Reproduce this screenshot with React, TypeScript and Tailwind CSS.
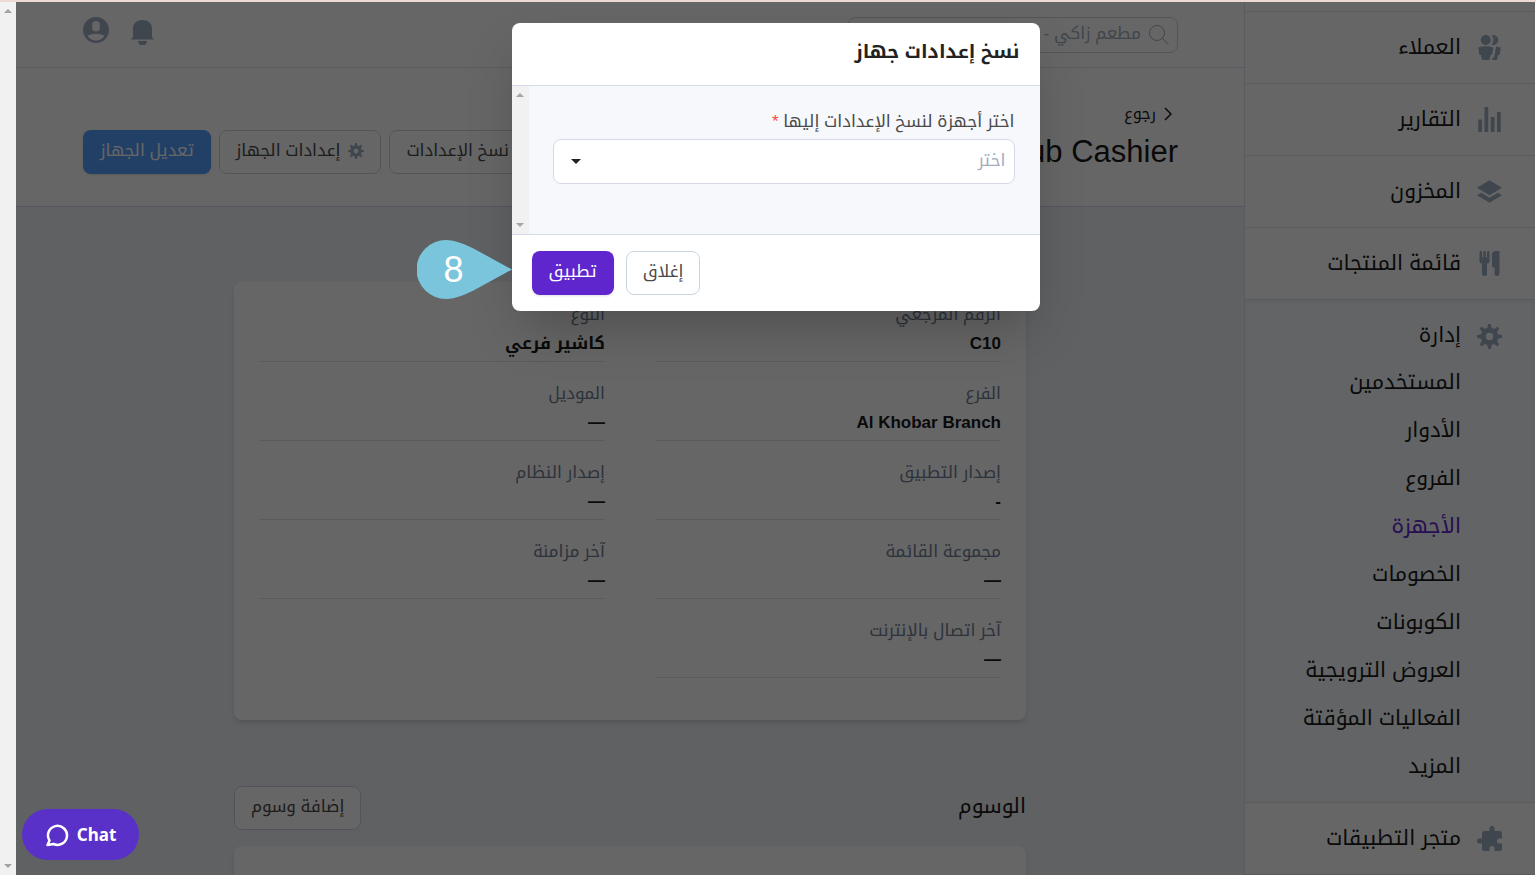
import { ReactNode, useState } from "react";

const icons = {
  customers:
    "M7 8a4 4 0 1 1 0-8 4 4 0 0 1 0 8zm0 1c2.15 0 4.2.4 6.1 1.09L12 16h-1.25L10 20H4l-.75-4H2L.9 10.09A17.93 17.93 0 0 1 7 9zm8.31.17c1.32.18 2.59.48 3.8.92L18 16h-1.25L16 20h-3.96l.37-2h1.25l1.65-8.83zM13 0a4 4 0 1 1-1.33 7.76 5.96 5.96 0 0 0 0-7.52C12.1.1 12.53 0 13 0z",
  reports: "M1 10h3v10H1V10zM6 0h3v20H6V0zm5 8h3v12h-3V8zm5-4h3v16h-3V4z",
  inventory:
    "M10 1l10 6-10 6L0 7l10-6zm6.67 10L20 13l-10 6-10-6 3.33-2L10 15l6.67-4z",
  menu: "M18 11v7a2 2 0 0 1-4 0v-5h-2V3a3 3 0 0 1 3-3h3v11zM4 10a2 2 0 0 1-2-2V1a1 1 0 0 1 2 0v4h1V1a1 1 0 0 1 2 0v4h1V1a1 1 0 0 1 2 0v7a2 2 0 0 1-2 2v8a2 2 0 0 1-4 0v-8z",
  cog: "M3.94 6.5L2.22 3.64l1.42-1.42L6.5 3.94c.52-.3 1.1-.54 1.7-.7L9 0h2l.8 3.24c.6.16 1.18.4 1.7.7l2.86-1.72 1.42 1.42-1.72 2.86c.3.52.54 1.1.7 1.7L20 9v2l-3.24.8c-.16.6-.4 1.18-.7 1.7l1.72 2.86-1.42 1.42-2.86-1.72c-.52.3-1.1.54-1.7.7L11 20H9l-.8-3.24c-.6-.16-1.18-.4-1.7-.7l-2.86 1.72-1.42-1.42 1.72-2.86c-.3-.52-.54-1.1-.7-1.7L0 11V9l3.24-.8c.16-.6.4-1.18.7-1.7zM10 13a3 3 0 1 0 0-6 3 3 0 0 0 0 6z",
  apps: "M20 14v4a2 2 0 0 1-2 2h-4v-2a2 2 0 0 0-4 0v2H6a2 2 0 0 1-2-2v-4H2a2 2 0 0 1 0-4h2V6c0-1.1.9-2 2-2h4V2a2 2 0 0 1 4 0v2h4a2 2 0 0 1 2 2v4h-2a2 2 0 0 0 0 4h2z",
  user: "M10 20a10 10 0 1 1 0-20 10 10 0 0 1 0 20zM7 6v2a3 3 0 1 0 6 0V6a3 3 0 1 0-6 0zm-3.65 8.44a8 8 0 0 0 13.3 0 15.94 15.94 0 0 0-13.3 0z",
};

const topItems = [
  { label: "العملاء", icon: icons.customers },
  { label: "التقارير", icon: icons.reports },
  { label: "المخزون", icon: icons.inventory },
  { label: "قائمة المنتجات", icon: icons.menu },
];

const manageItems = [
  "المستخدمين",
  "الأدوار",
  "الفروع",
  "الأجهزة",
  "الخصومات",
  "الكوبونات",
  "العروض الترويجية",
  "الفعاليات المؤقتة",
  "المزيد",
];

const fields = [
  { label: "الرقم المرجعي", value: "C10" },
  { label: "النوع", value: "كاشير فرعي" },
  { label: "الفرع", value: "Al Khobar Branch" },
  { label: "الموديل", value: "—" },
  { label: "إصدار التطبيق", value: "-" },
  { label: "إصدار النظام", value: "—" },
  { label: "مجموعة القائمة", value: "—" },
  { label: "آخر مزامنة", value: "—" },
  { label: "آخر اتصال بالإنترنت", value: "—" },
];

function Icon({ path, className }: { path: string; className: string }) {
  return (
    <svg viewBox="0 0 20 20" fill="currentColor" className={className}>
      <path d={path} />
    </svg>
  );
}

function ScrollTrack({ className }: { className: string }) {
  return (
    <div
      className={`flex shrink-0 flex-col items-center justify-between bg-[#f1f1f1] text-[#a3a3a3] ${className}`}
    >
      <svg viewBox="0 0 8 4" fill="currentColor" className="h-1 w-2">
        <path d="M0 4l4-4 4 4z" />
      </svg>
      <svg viewBox="0 0 8 4" fill="currentColor" className="h-1 w-2">
        <path d="M0 0l4 4 4-4z" />
      </svg>
    </div>
  );
}

function OutlineButton({ children }: { children: ReactNode }) {
  return (
    <button
      type="button"
      className="flex h-11 items-center gap-2 whitespace-nowrap rounded-lg border border-[#cbd5e0] bg-white px-4 pb-0.5 text-[17px] text-[#4a4a4a]"
    >
      {children}
    </button>
  );
}

function Sidebar() {
  return (
    <nav className="flex w-[291px] shrink-0 flex-col overflow-hidden border-l border-[#dfe4f0] bg-white pt-[9px] text-[21px] text-[#1a1a1a]">
      {topItems.map((item) => (
        <a
          key={item.label}
          href="#"
          className="flex h-[72px] shrink-0 items-center gap-4 border-t border-[#dfe4f0] pr-[33px]"
        >
          <Icon path={item.icon} className="size-[25px] text-[#a0aec0]" />
          <span className="pb-0.5">{item.label}</span>
        </a>
      ))}
      <div className="shrink-0 border-y border-[#dfe4f0] bg-[#f7fafc] pb-2.5 shadow-inner">
        <a href="#" className="flex h-[72px] items-center gap-4 pr-[33px]">
          <Icon path={icons.cog} className="size-[25px] text-[#a0aec0]" />
          <span className="pb-0.5">إدارة</span>
        </a>
        <ul className="-mt-3">
          {manageItems.map((item) => (
            <li key={item}>
              <a
                href="#"
                className={`flex h-12 items-center pr-[74px] pb-1 ${
                  item === "الأجهزة" ? "text-[#6026ce]" : ""
                }`}
              >
                {item}
              </a>
            </li>
          ))}
        </ul>
      </div>
      <a
        href="#"
        className="flex h-[72px] shrink-0 items-center gap-4 border-b border-[#dfe4f0] pr-[33px]"
      >
        <Icon path={icons.apps} className="size-[25px] text-[#a0aec0]" />
        <span className="pb-0.5">متجر التطبيقات</span>
      </a>
    </nav>
  );
}

function Topbar() {
  return (
    <header className="flex h-[66px] shrink-0 items-start justify-between border-b border-[#dfe4f0] bg-white pt-[15px] pr-[66px] pl-[67px]">
      <label className="flex h-9 w-[330px] items-center gap-2 rounded-lg border border-[#cbd5e0] px-2 text-[#a0aec0]">
        <svg
          viewBox="0 0 20 20"
          fill="none"
          stroke="currentColor"
          className="size-5 shrink-0"
        >
          <circle cx="8" cy="8" r="7.5" />
          <path d="M13.5 13.5l6 6" />
        </svg>
        <input
          type="text"
          aria-label="بحث"
          placeholder="مطعم زاكي -"
          className="min-w-0 flex-1 bg-transparent pb-0.5 text-[17px] outline-none placeholder:text-[#a0aec0]"
        />
      </label>
      <div className="flex items-start gap-5 text-[#a0aec0]">
        <button type="button" aria-label="الإشعارات">
          <svg viewBox="0 0 26 28" fill="currentColor" className="h-7 w-[26px]">
            <path d="M4 20.500v-9c0-5.500 4-8.500 9.500-8.500s9.500 3 9.500 8.500v9l1.500.8v1.200H2.500v-1.200z" />
            <path d="M9 24h9a4.500 4.500 0 0 1-9 0z" />
          </svg>
        </button>
        <button type="button" aria-label="الحساب">
          <Icon path={icons.user} className="size-[26px]" />
        </button>
      </div>
    </header>
  );
}

function TitleBar() {
  return (
    <div className="flex shrink-0 items-start justify-between border-b border-[#d6d9ea] bg-white pt-8 pr-[66px] pb-[30px] pl-[67px]">
      <div>
        <a href="#" className="flex h-7 items-center gap-2 pr-[6px] text-base text-[#1a1a1a]">
          <svg
            viewBox="0 0 8 14"
            fill="none"
            stroke="currentColor"
            strokeWidth="1.500"
            className="h-3.5 w-2"
          >
            <path d="M1 1l6 6-6 6" />
          </svg>
          رجوع
        </a>
        <h1 dir="ltr" className="text-[31px] leading-[48px] text-[#1a1a1a]">
          Sub Cashier
        </h1>
      </div>
      <div className="flex gap-2 pt-[30px]">
        <OutlineButton>نسخ الإعدادات</OutlineButton>
        <OutlineButton>
          <Icon path={icons.cog} className="size-4 text-[#a0aec0]" />
          إعدادات الجهاز
        </OutlineButton>
        <button
          type="button"
          className="h-11 rounded-lg bg-[#559dff] px-[17px] pb-0.5 text-[17px] text-white shadow"
        >
          تعديل الجهاز
        </button>
      </div>
    </div>
  );
}

function DeviceDetails() {
  return (
    <div className="mx-auto w-full max-w-[792px] pt-[75px]">
      <dl className="grid grid-cols-2 gap-x-[50px] rounded-lg bg-white px-[25px] pt-px pb-[42px] shadow-md">
        {fields.map((field) => (
          <div
            key={field.label}
            className="flex h-[79px] flex-col border-b border-[#dfe4f0] pt-[18px]"
          >
            <dt className="text-[17px] leading-7 text-[#718096]">{field.label}</dt>
            <dd className="text-[17px] leading-[30px] font-bold text-[#1a1a1a]">
              {field.value}
            </dd>
          </div>
        ))}
      </dl>
      <div className="mt-[66px] mb-4 flex items-center justify-between">
        <h2 className="pb-1 text-[21px] text-[#1a1a1a]">الوسوم</h2>
        <OutlineButton>إضافة وسوم</OutlineButton>
      </div>
      <div className="h-40 rounded-lg bg-white shadow-md" />
    </div>
  );
}

function StepMarker() {
  return (
    <div dir="ltr" className="absolute top-[217px] right-full h-[59px] w-[95px]">
      <svg viewBox="0 0 95 59" className="absolute inset-0 size-full" fill="#7ac4dc">
        <path d="M95 29.500L62 11.500C48 4 38 0 29 0a29.500 29.500 0 0 0 0 59c9 0 19-4 33-11.500z" />
      </svg>
      <span className="relative flex h-full w-[74px] items-center justify-center text-4xl text-white">
        8
      </span>
    </div>
  );
}

function CopySettingsDialog() {
  const [device, setDevice] = useState("");

  return (
    <div
      role="dialog"
      aria-labelledby="dialog-title"
      className="relative w-[528px] rounded-lg bg-white shadow-2xl"
    >
      <h2
        id="dialog-title"
        className="flex h-[62px] items-center px-5 pb-1 text-[19px] font-bold text-[#222]"
      >
        نسخ إعدادات جهاز
      </h2>
      <div className="flex h-[150px] border-y border-[#d6d9ea] bg-[#f7f8fc]">
        <div className="flex-1 pt-[21px] pr-[25px] pl-6">
          <label htmlFor="device" className="block pb-0.5 text-[17px] leading-[30px] text-[#4a4a4a]">
            اختر أجهزة لنسخ الإعدادات إليها <span className="text-[#f44]">*</span>
          </label>
          <div className="relative">
            <select
              id="device"
              value={device}
              onChange={(e) => setDevice(e.target.value)}
              className="h-[45px] w-full appearance-none rounded-lg border border-[#d6d9ea] bg-white px-2 pb-0.5 text-[17px] text-[#a0aec0] outline-none"
            >
              <option value="">اختر</option>
              <option value="c10">C10</option>
            </select>
            <svg
              viewBox="0 0 10 5"
              className="pointer-events-none absolute top-5 left-[18px] h-[5px] w-2.5"
              fill="#222"
            >
              <path d="M0 0h10L5 5z" />
            </svg>
          </div>
        </div>
        <ScrollTrack className="w-[17px] py-[7px]" />
      </div>
      <div className="flex items-center justify-end gap-3 px-5 py-4">
        <OutlineButton>إغلاق</OutlineButton>
        <button
          type="button"
          className="h-11 rounded-lg bg-[#6026ce] px-[17px] pb-0.5 text-[17px] text-white shadow"
        >
          تطبيق
        </button>
      </div>
      <StepMarker />
    </div>
  );
}

export default function App() {
  return (
    <div
      dir="rtl"
      className="flex h-screen flex-col overflow-hidden border-t-2 border-[#eed9d4] font-['Liberation_Sans','Noto_Kufi_Arabic','Noto_Sans_Arabic',sans-serif]"
    >
      <div className="flex min-h-0 flex-1 pr-px">
        <div className="relative flex min-w-0 flex-1 overflow-hidden">
          <Sidebar />
          <main className="flex min-w-0 flex-1 flex-col overflow-hidden bg-[#edf2f7]">
            <Topbar />
            <TitleBar />
            <DeviceDetails />
          </main>
          <div className="absolute inset-0 flex items-start justify-center bg-black/60 pt-[21px]">
            <CopySettingsDialog />
          </div>
          <button
            type="button"
            dir="ltr"
            className="absolute bottom-[15px] left-1.5 flex h-[51px] w-[117px] items-center justify-center gap-2 rounded-full bg-[#5a31c8] font-['Noto_Sans',sans-serif] text-[17px] font-bold text-white"
          >
            <svg
              viewBox="0 0 24 24"
              fill="none"
              stroke="currentColor"
              strokeWidth="2.500"
              strokeLinejoin="round"
              className="size-6"
            >
              <path d="M2.500 22l2-4.500A9.500 9.500 0 1 1 8.500 21z" />
            </svg>
            Chat
          </button>
        </div>
        <ScrollTrack className="w-4 py-[7px]" />
      </div>
    </div>
  );
}
